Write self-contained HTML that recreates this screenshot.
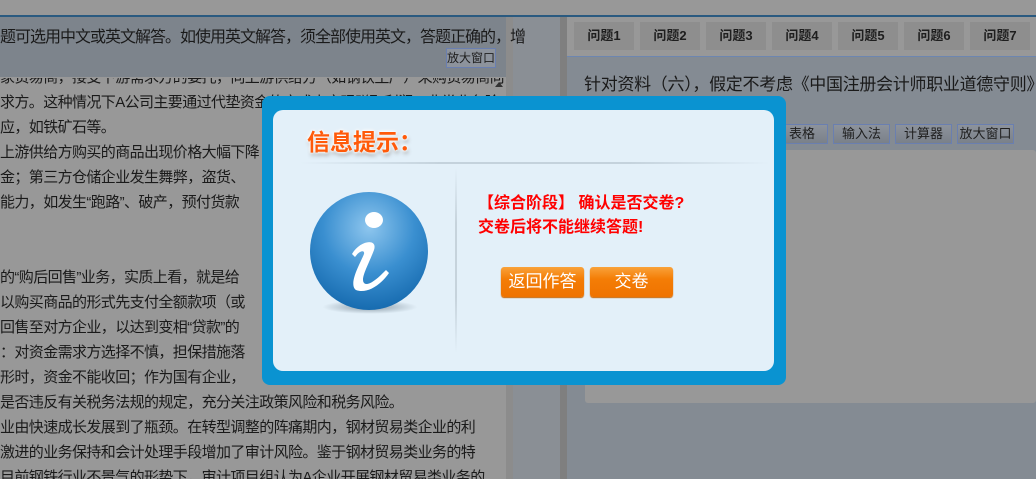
<!DOCTYPE html>
<html><head><meta charset="utf-8"><style>
*{margin:0;padding:0;box-sizing:border-box}
html,body{width:1036px;height:479px;overflow:hidden}
body{background:#989898;font-family:"Liberation Sans","Noto Sans CJK SC",sans-serif;position:relative}
.abs{position:absolute}
.lt{font-size:15px;letter-spacing:-0.6px;color:#1a1a1a;white-space:nowrap;left:0}
.tab{position:absolute;top:22px;width:60px;height:28px;background:#8e8e8e;font-size:13px;font-weight:bold;color:#1e1e1e;text-align:center;line-height:28px}
.btn{position:absolute;top:124px;height:20px;border:1px solid #6a7fb0;background:linear-gradient(#8d939c,#7a818a);font-size:13px;color:#1e1e1e;text-align:center;line-height:18px;white-space:nowrap}
.ob{position:absolute;top:267px;height:30px;border-radius:3px;background:linear-gradient(#f9a23a,#f47d06 40%,#ef7300);color:#fff;font-size:17px;text-align:center;line-height:30px;box-shadow:0 1px 1px #c96400}
</style></head><body>
<div class="abs" style="left:0;top:15px;width:1036px;height:2px;background:#2a5a80"></div>
<div class="abs" style="left:0;top:17px;width:506px;height:60px;background:#7d848c"></div>
<div class="abs" style="left:506px;top:17px;width:7px;height:462px;background:#8c8c8c"></div>
<div class="abs" style="left:513px;top:17px;width:47px;height:462px;background:#8a8f95"></div>
<div class="abs lt" style="top:23px;font-size:16px;letter-spacing:-1px">题可选用中文或英文解答。如使用英文解答，须全部使用英文，答题正确的，增</div>
<div class="abs" style="left:446px;top:48px;width:50px;height:20px;border:1px solid #6a7fb0;background:#8d939c;font-size:12px;line-height:18px;text-align:center;color:#1e1e1e;white-space:nowrap">放大窗口</div>
<div class="abs" style="left:495px;top:82px;width:0;height:0;border-left:4px solid transparent;border-right:4px solid transparent;border-bottom:5px solid #333"></div>
<div class="abs lt" style="top:66px;clip-path:inset(12px 0 0 0)">家贸易商，接受下游需求方的委托，向上游供给方（如钢铁生产）采购贸易商向</div>
<div class="abs lt" style="top:91px">求方。这种情况下A公司主要通过代垫资金的方式来实现赚取利润，非常业务险</div>
<div class="abs lt" style="top:116px">应，如铁矿石等。</div>
<div class="abs lt" style="top:141px">上游供给方购买的商品出现价格大幅下降</div>
<div class="abs lt" style="top:166px">金；第三方仓储企业发生舞弊，盗货、</div>
<div class="abs lt" style="top:191px">能力，如发生“跑路”、破产，预付货款</div>
<div class="abs lt" style="top:266px">的“购后回售”业务，实质上看，就是给</div>
<div class="abs lt" style="top:291px">以购买商品的形式先支付全额款项（或</div>
<div class="abs lt" style="top:316px">回售至对方企业，以达到变相“贷款”的</div>
<div class="abs lt" style="top:341px">：对资金需求方选择不慎，担保措施落</div>
<div class="abs lt" style="top:366px">形时，资金不能收回；作为国有企业，</div>
<div class="abs lt" style="top:391px">是否违反有关税务法规的规定，充分关注政策风险和税务风险。</div>
<div class="abs lt" style="top:416px">业由快速成长发展到了瓶颈。在转型调整的阵痛期内，钢材贸易类企业的利</div>
<div class="abs lt" style="top:441px">激进的业务保持和会计处理手段增加了审计风险。鉴于钢材贸易类业务的特</div>
<div class="abs lt" style="top:466px">目前钢铁行业不景气的形势下，审计项目组认为A企业开展钢材贸易类业务的</div>

<div class="abs" style="left:560px;top:17px;width:7px;height:462px;background:#7f7f7f"></div>
<div class="abs" style="left:567px;top:17px;width:469px;height:39px;background:#989898"></div>
<div class="abs" style="left:567px;top:56px;width:469px;height:1px;background:#6d86b0"></div>
<div class="abs" style="left:567px;top:57px;width:469px;height:422px;background:#848b93"></div>
<div class="tab" style="left:574px">问题1</div><div class="tab" style="left:640px">问题2</div><div class="tab" style="left:706px">问题3</div><div class="tab" style="left:772px">问题4</div><div class="tab" style="left:838px">问题5</div><div class="tab" style="left:904px">问题6</div><div class="tab" style="left:970px">问题7</div>
<div class="abs" style="left:584px;top:70px;font-size:17px;letter-spacing:-0.3px;color:#1a1a1a;white-space:nowrap">针对资料（六），假定不考虑《中国注册会计师职业道德守则》的</div>
<div class="btn" style="left:776px;width:52px">表格</div>
<div class="btn" style="left:833px;width:57px">输入法</div>
<div class="btn" style="left:895px;width:57px">计算器</div>
<div class="btn" style="left:957px;width:57px">放大窗口</div>
<div class="abs" style="left:585px;top:150px;width:451px;height:253px;background:#989898;border-radius:3px"></div>

<div class="abs" style="left:262px;top:96px;width:524px;height:289px;background:#0a93d1;border-radius:8px"></div>
<div class="abs" style="left:273px;top:110px;width:501px;height:261px;background:#e3f0f9;border-radius:10px"></div>
<div class="abs" style="left:300px;top:162px;width:470px;height:2px;background:linear-gradient(90deg,rgba(190,205,215,0),#c4d2dc 30%,#c4d2dc 70%,rgba(190,205,215,0))"></div>
<div class="abs" style="left:455px;top:168px;width:2px;height:185px;background:linear-gradient(#e3f0f9,#c6d3dc 30%,#c6d3dc 70%,#e3f0f9)"></div>
<div class="abs" style="left:307px;top:123px;font-size:23px;font-weight:bold;color:#ff5a0a;text-shadow:0 0 2px #fff,0 0 3px #fff,0 0 4px #fff,1px 3px 4px #999;white-space:nowrap">信息提示：</div>
<div class="abs" style="left:322px;top:300px;width:96px;height:14px;border-radius:50%;background:radial-gradient(#8a9aa6,rgba(200,215,225,0) 70%)"></div>
<div class="abs" style="left:310px;top:192px;width:118px;height:118px;border-radius:50%;background:radial-gradient(circle at 50% 30%,#8ec6ee,#3a8fd0 45%,#0f63a8 90%)"></div>
<svg class="abs" style="left:310px;top:192px" width="118" height="118" viewBox="0 0 118 118">
<ellipse cx="64" cy="28" rx="9" ry="8" fill="#fff"/>
<path d="M42 62 C50 48 68 46 64 58 C58 74 48 90 56 92 C62 92 70 84 76 78 L79 81 C70 94 56 102 46 98 C38 92 50 72 54 62 C55 58 50 58 45 65 Z" fill="#fff"/>
</svg>
<div class="abs" style="left:478px;top:189px;font-size:16px;font-weight:bold;color:#f00;white-space:nowrap">【综合阶段】 确认是否交卷?</div>
<div class="abs" style="left:478px;top:213px;font-size:16px;font-weight:bold;color:#f00;white-space:nowrap">交卷后将不能继续答题!</div>
<div class="ob" style="left:501px;width:83px">返回作答</div>
<div class="ob" style="left:590px;width:83px">交卷</div>
</body></html>
